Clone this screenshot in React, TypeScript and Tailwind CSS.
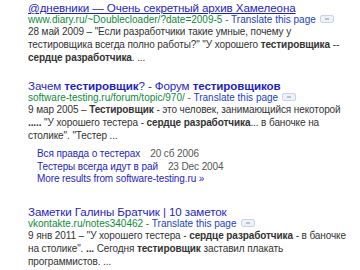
import React from 'react';

const font = { fontFamily: '"Liberation Sans", Arial, sans-serif' };

const PreviewIcon: React.FC = () => (
  <span className="inline-block align-middle ml-1 w-[14px] h-[8px] rounded-[2px] border border-[#c9d4e6] bg-[#eef2f8] relative top-[-1px]">
    <span className="absolute left-[4px] top-[2px] w-[4px] h-[2px] bg-[#b7c3d8]" />
  </span>
);

const UrlLine: React.FC<{ url: string }> = ({ url }) => (
  <div className="text-[10px] leading-[11px] whitespace-nowrap">
    <span className="text-[#0e8a3a]">{url}</span>
    <span className="text-[#666]"> - </span>
    <span className="text-[#1a3fbf]">Translate this page</span>
    <PreviewIcon />
  </div>
);

const titleCls = 'text-[11.6px] leading-[12px] tracking-[-0.1px] text-[#1f1fbf] whitespace-nowrap';
const snippetCls = 'text-[10px] leading-[13px] tracking-[-0.1px] text-[#333]';

export default function App() {
  return (
    <div className="w-[360px] h-[270px] overflow-hidden bg-white pl-[28px] pt-[2px]" style={font}>
      {/* result 1 */}
      <div>
        <div className={`${titleCls} underline`}>
          @дневники — Очень секретный архив Хамелеона
        </div>
        <UrlLine url="www.diary.ru/~Doublecloader/?date=2009-5" />
        <div className={snippetCls}>
          <div className="whitespace-nowrap">28 май 2009 – "Если разработчики такие умные, почему у</div>
          <div className="whitespace-nowrap">тестировщика всегда полно работы?" "У хорошего <b>тестировщика</b> --</div>
          <div className="whitespace-nowrap"><b>сердце разработчика</b>. ...</div>
        </div>
      </div>

      {/* result 2 */}
      <div className="mt-[16px]">
        <div className={titleCls}>
          Зачем <b>тестировщик</b>? - Форум <b>тестировщиков</b>
        </div>
        <UrlLine url="software-testing.ru/forum/topic/970/" />
        <div className={snippetCls}>
          <div className="whitespace-nowrap">9 мар 2005 – <b>Тестировщик</b> - это человек, занимающийся некоторой</div>
          <div className="whitespace-nowrap"><b>.....</b> "У хорошего тестера - <b>сердце разработчика</b>... в баночке на</div>
          <div className="whitespace-nowrap">столике". "Тестер ...</div>
        </div>
        <div className="pl-[9px] mt-[6px] text-[10px] leading-[12.5px] tracking-[-0.1px]">
          <div className="whitespace-nowrap">
            <span className="text-[#1f1fbf]">Вся правда о тестерах</span>
            <span className="text-[#555] ml-[10px]">20 сб 2006</span>
          </div>
          <div className="whitespace-nowrap">
            <span className="text-[#1f1fbf]">Тестеры всегда идут в рай</span>
            <span className="text-[#555] ml-[10px]">23 Dec 2004</span>
          </div>
          <div className="whitespace-nowrap text-[#1f1fbf]">More results from software-testing.ru »</div>
        </div>
      </div>

      {/* result 3 */}
      <div className="mt-[20px]">
        <div className={titleCls}>
          Заметки Галины Братчик | 10 заметок
        </div>
        <UrlLine url="vkontakte.ru/notes340462" />
        <div className={snippetCls}>
          <div className="whitespace-nowrap">9 янв 2011 – "У хорошего тестера - <b>сердце разработчика</b> - в баночке</div>
          <div className="whitespace-nowrap">на столике". <b>...</b> Сегодня <b>тестировщик</b> заставил плакать</div>
          <div className="whitespace-nowrap">программистов. ...</div>
        </div>
      </div>
    </div>
  );
}
